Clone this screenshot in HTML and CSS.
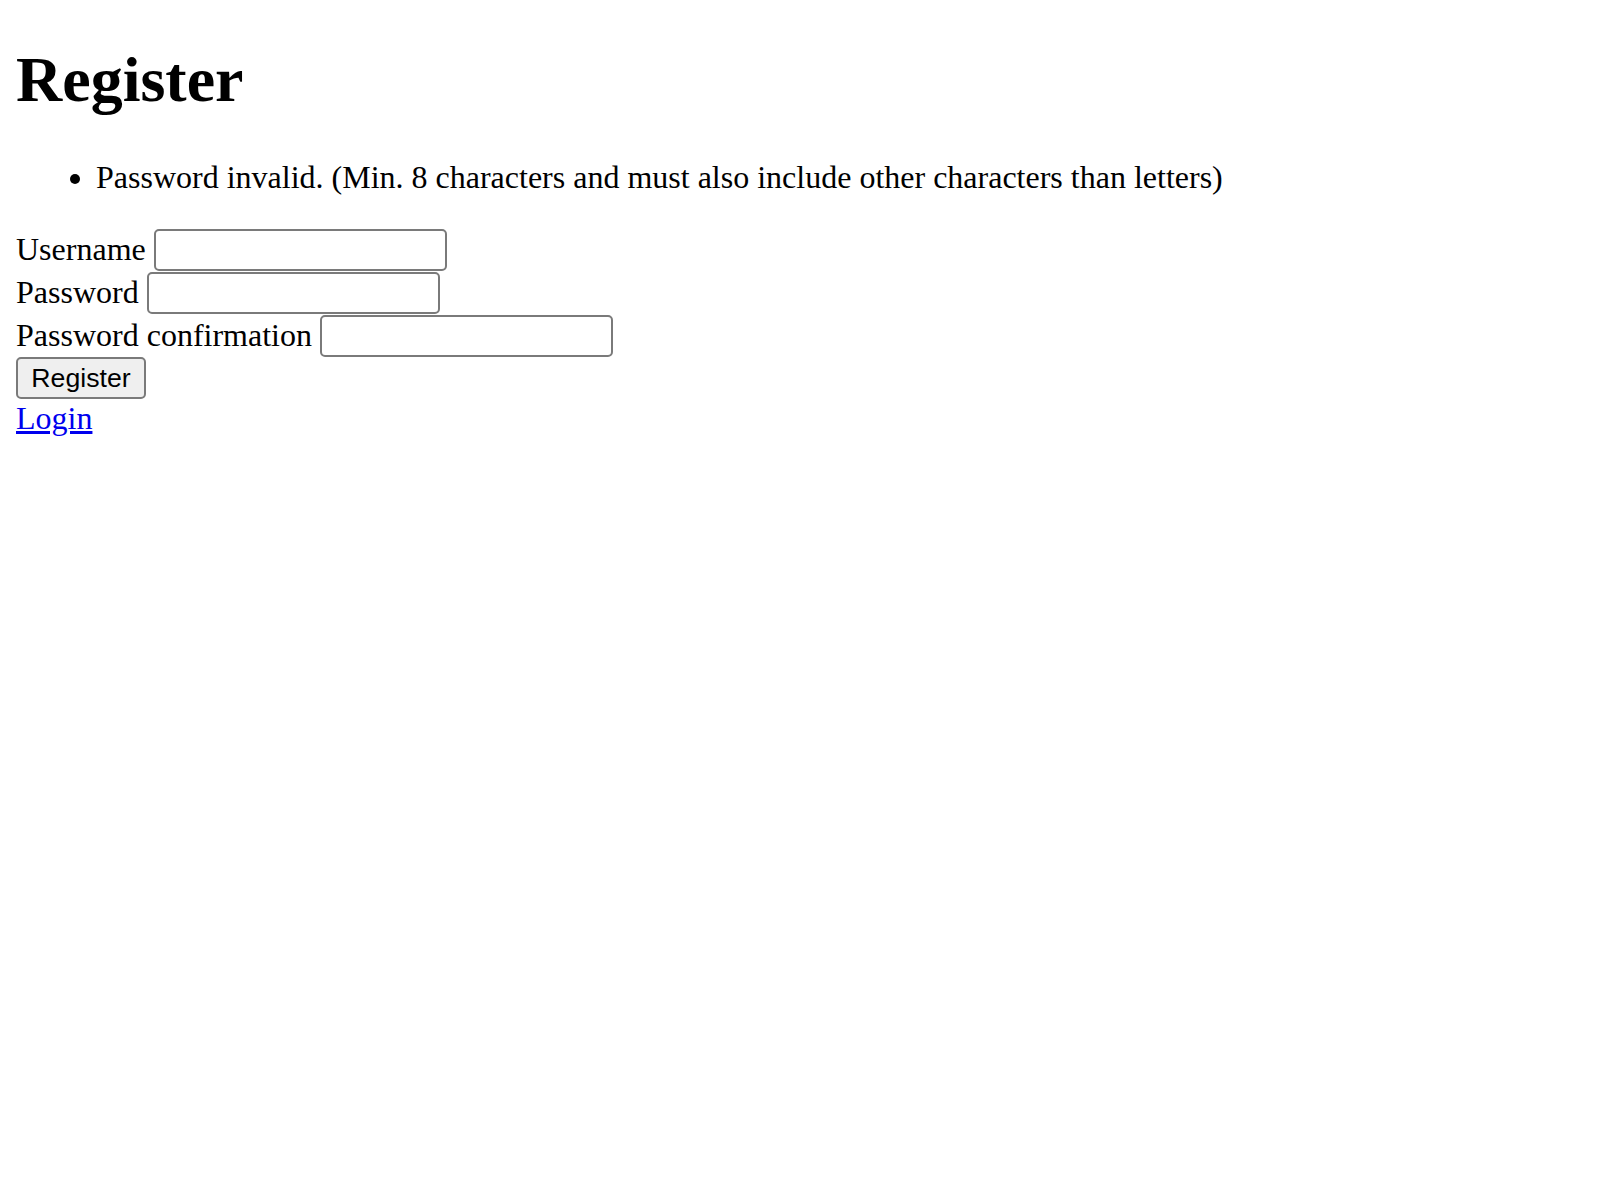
FILE: index.html
```html
<!DOCTYPE html>
<html lang="en">
<head>
<meta charset="utf-8">
<title>Register</title>
<link rel="stylesheet" href="styles.css">
</head>
<body>
<h1 class="title">Register</h1>
<ul class="errors">
  <li>Password invalid. (Min. 8 characters and must also include other characters than letters)</li>
</ul>
<form class="form">
  <div class="row"><label for="username">Username</label><input class="field" id="username" type="text"></div>
  <div class="row"><label for="password">Password</label><input class="field" id="password" type="password"></div>
  <div class="row"><label for="confirm">Password confirmation</label><input class="field" id="confirm" type="password"></div>
  <div class="row"><button class="btn" type="submit">Register</button></div>
</form>
<a class="link" href="#">Login</a>
</body>
</html>
```
FILE: styles.css
```css
html, body {
  background: #ffffff;
}
body {
  margin: 16px;
  font-family: "Liberation Serif", "Times New Roman", serif;
  font-size: 32px;
  color: #000000;
}
.title {
  font-size: 64px;
  font-weight: bold;
  margin: 26.5px 0 42.88px;
}
.errors {
  margin: 32px 0;
  padding-left: 80px;
}
.form {
  margin: 0;
}
.row {
  display: flex;
  align-items: center;
  gap: 8px;
  height: 42.9px;
}
.field {
  box-sizing: border-box;
  width: 293px;
  height: 42px;
  border: 2px solid #7a7a7a;
  border-radius: 5px;
  background: #ffffff;
  padding: 2px 4px;
  font-family: "Liberation Sans", Arial, sans-serif;
  font-size: 26px;
  margin: 0;
}
.btn {
  box-sizing: border-box;
  width: 130px;
  height: 42px;
  background: #efefef;
  border: 2px solid #7a7a7a;
  border-radius: 5px;
  padding: 0 12px;
  font-family: "Liberation Sans", Arial, sans-serif;
  font-size: 26.67px;
  color: #000000;
  margin: 0;
}
.link {
  color: #0000ee;
  text-decoration: underline;
  display: inline-block;
}
```
